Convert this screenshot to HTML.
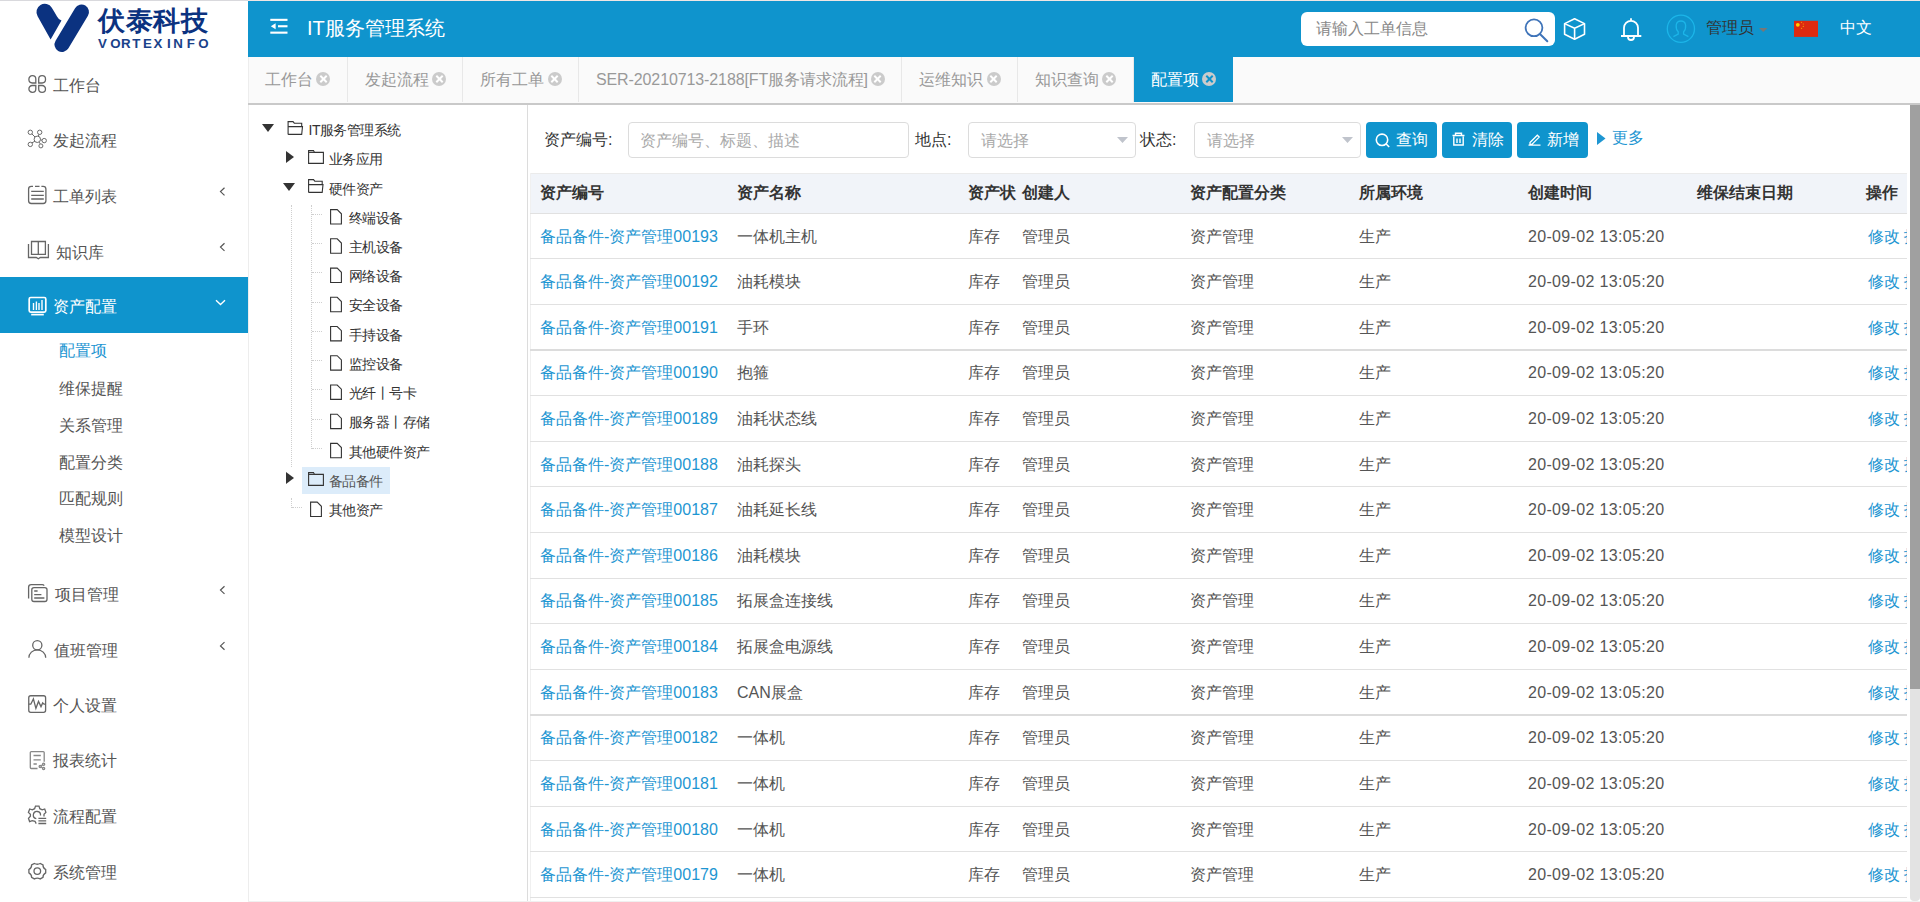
<!DOCTYPE html>
<html><head><meta charset="utf-8">
<style>
*{box-sizing:border-box;margin:0;padding:0}
html,body{width:1920px;height:902px;overflow:hidden;background:#fff}
body{position:relative;font-family:"Liberation Sans",sans-serif;font-size:16px;color:#555}
.a{position:absolute;white-space:nowrap}
svg{position:absolute;overflow:visible}
.tx{line-height:20px;font-size:16px;color:#555}
.chev{width:7px;height:7px;border-left:1.2px solid #555;border-bottom:1.2px solid #555;transform:rotate(45deg)}
.tab{position:absolute;top:57px;height:45px;border-right:1px solid #e8e8e8;color:#999;font-size:16px;white-space:nowrap}
.tab .t{position:absolute;top:13px;line-height:20px}
.tab .x{position:absolute;top:15px;width:14px;height:14px;border-radius:50%;background:#cbcbcb}
.tab .x:before,.tab .x:after{content:"";position:absolute;left:2.5px;top:6px;width:9px;height:2px;background:#fff;transform:rotate(45deg)}
.tab .x:after{transform:rotate(-45deg)}
.tab.act{background:#0f94cd;color:#fff;border-right:none}
.tab.act .x:before,.tab.act .x:after{background:#0f94cd}
.tn{position:absolute;font-size:14px;letter-spacing:-0.5px;line-height:17px;color:#333;white-space:nowrap}
.tri-d{position:absolute;width:0;height:0;border-left:6px solid transparent;border-right:6px solid transparent;border-top:8px solid #333}
.tri-r{position:absolute;width:0;height:0;border-top:6px solid transparent;border-bottom:6px solid transparent;border-left:8px solid #333}
.dv{position:absolute;width:1px;border-left:1px dotted #cfcfcf}
.dh{position:absolute;height:1px;border-top:1px dotted #cfcfcf}
.th{position:absolute;top:173px;font-weight:bold;color:#333;line-height:20px;white-space:nowrap}
.cell{position:absolute;line-height:20px;white-space:nowrap;color:#555}
.lnk{color:#1e96d2}
.rl{position:absolute;left:530px;width:1380px;height:1px;background:#e1e1e1}
.lbl{position:absolute;top:130px;line-height:20px;color:#333;white-space:nowrap}
.inp{position:absolute;top:122px;height:36px;border:1px solid #dcdcdc;border-radius:4px;background:#fff}
.ph{position:absolute;top:8px;line-height:20px;color:#aaa;white-space:nowrap}
.btn{position:absolute;top:122px;height:36px;border-radius:4px;background:#0f94cd;color:#fff;white-space:nowrap}

</style></head><body>
<div class="a" style="left:0;top:0;width:248px;height:1px;background:#d9d9dd"></div>
<div class="a" style="left:248px;top:0;width:1672px;height:1px;background:#efe6e4"></div>
<div class="a" style="left:248px;top:57px;width:1px;height:845px;background:#ededed"></div>
<!-- logo -->
<svg style="left:0;top:0" width="100" height="56" viewBox="0 0 100 56">
<path d="M50.6,39.5 L37.6,16.2 A8,8 0 0 1 51.8,7.8 Q55,13 57,16.5 Q58.5,19.5 61.5,20.6 Z" fill="#0b3280"/>
<line x1="81.5" y1="12" x2="62" y2="44.5" stroke="#fff" stroke-width="19.5" stroke-linecap="round"/>
<line x1="81.5" y1="12" x2="62" y2="44.5" stroke="#0b3280" stroke-width="15" stroke-linecap="round"/>
</svg>
<div class="a" style="left:98px;top:4px;font-size:27px;line-height:34px;font-weight:bold;color:#0b3280;letter-spacing:0.6px">伏泰科技</div>
<div class="a" style="left:98.0px;top:36.5px;font-size:13.3px;line-height:14px;font-weight:bold;color:#1a428a">V</div><div class="a" style="left:110.2px;top:36.5px;font-size:13.3px;line-height:14px;font-weight:bold;color:#1a428a">O</div><div class="a" style="left:121.1px;top:36.5px;font-size:13.3px;line-height:14px;font-weight:bold;color:#1a428a">R</div><div class="a" style="left:132.2px;top:36.5px;font-size:13.3px;line-height:14px;font-weight:bold;color:#1a428a">T</div><div class="a" style="left:142.9px;top:36.5px;font-size:13.3px;line-height:14px;font-weight:bold;color:#1a428a">E</div><div class="a" style="left:153.6px;top:36.5px;font-size:13.3px;line-height:14px;font-weight:bold;color:#1a428a">X</div><div class="a" style="left:167.0px;top:36.5px;font-size:13.3px;line-height:14px;font-weight:bold;color:#1a428a">I</div><div class="a" style="left:173.2px;top:36.5px;font-size:13.3px;line-height:14px;font-weight:bold;color:#1a428a">N</div><div class="a" style="left:186.7px;top:36.5px;font-size:13.3px;line-height:14px;font-weight:bold;color:#1a428a">F</div><div class="a" style="left:198.2px;top:36.5px;font-size:13.3px;line-height:14px;font-weight:bold;color:#1a428a">O</div>

<!-- menu -->
<svg style="left:0;top:0" width="248" height="902" viewBox="0 0 248 902" fill="none" stroke="#666" stroke-width="1.3">
<!-- 工作台 -->
<path d="M32.3,75.7 L32.4,75.7 A3.4,3.4 0 0 1 35.8,79.10000000000001 L35.8,83 L32.3,83 A3.4,3.4 0 0 1 28.9,79.6 L28.9,79.10000000000001 A3.4,3.4 0 0 1 32.3,75.7 Z"/><path d="M42.1,75.7 L42.1,75.7 A3.4,3.4 0 0 1 45.5,79.10000000000001 L45.5,79.6 A3.4,3.4 0 0 1 42.1,83 L38.7,83 L38.7,79.10000000000001 A3.4,3.4 0 0 1 42.1,75.7 Z"/><path d="M32.3,85.5 L35.8,85.5 L35.8,88.89999999999999 A3.4,3.4 0 0 1 32.4,92.3 L32.3,92.3 A3.4,3.4 0 0 1 28.9,88.89999999999999 L28.9,88.9 A3.4,3.4 0 0 1 32.3,85.5 Z"/><path d="M38.7,85.5 L42.1,85.5 A3.4,3.4 0 0 1 45.5,88.9 L45.5,88.89999999999999 A3.4,3.4 0 0 1 42.1,92.3 L42.1,92.3 A3.4,3.4 0 0 1 38.7,88.89999999999999 L38.7,85.5 Z"/>
<!-- 发起流程 -->
<g transform="translate(24,126)" stroke-width="1" stroke="#6a6a6a">
<circle cx="13.3" cy="13.3" r="3.2"/><circle cx="6.3" cy="6.3" r="2.2"/><circle cx="15.7" cy="6.3" r="2.2"/><circle cx="20.2" cy="14.6" r="2.2"/><circle cx="6.3" cy="18.4" r="2.2"/><circle cx="16.9" cy="19.9" r="2"/>
<path d="M7.9,7.9 L11,11 M15,8.3 L14.3,10.2 M16.5,13.9 L18,14.2 M8,16.8 L10.9,15.3 M15.3,16.2 L16.2,17.9"/>
</g>
<!-- 工单列表 -->
<g transform="translate(24,182)">
<path d="M9,4.3 L7.3,4.3 Q4.6,4.3 4.6,7 L4.6,18.8 Q4.6,21.5 7.3,21.5 L19.2,21.5 Q21.9,21.5 21.9,18.8 L21.9,7 Q21.9,4.3 19.2,4.3 L17.4,4.3 M11,4.3 L15.5,4.3"/>
<path d="M7.2,9.4 L19.8,9.4 M7.2,13.4 L19.8,13.4 M7.2,17 L19.8,17"/>
</g>
<!-- 知识库 -->
<g transform="translate(24,238)">
<path d="M4.5,6 L4.5,19.5 L12.3,19.5 L14.3,20.8 L16.3,19.5 L24.4,19.5 L24.4,6"/>
<path d="M7.5,3.5 L14.3,3.5 L14.3,16.4 L7.5,16.4 Z M14.3,3.5 L21.4,3.5 L21.4,16.4 L14.3,16.4"/>
</g>
<!-- 资产配置 active (white) -->
<g transform="translate(24,292)" stroke="#fff" stroke-width="1.7">
<rect x="5.2" y="5.5" width="16.6" height="14.6" rx="1.5"/>
<path d="M7.2,22.6 L19.8,22.6"/>
<path d="M9.5,11 L9.5,18 M12.4,9.6 L12.4,18 M15,11 L15,18 M18,8 L18,18" stroke-width="1.4"/>
</g>
<!-- 项目管理 -->
<g transform="translate(24,580)">
<path d="M4.6,18.4 L4.6,7.2 Q4.6,4.6 7.2,4.6 L18.2,4.6 Q19.5,4.6 20.2,5.6"/>
<rect x="7.8" y="7.6" width="15.2" height="13.9" rx="2.2"/>
<path d="M10.2,11 L13.6,11 M10.2,14.55 L17.4,14.55 M10.2,18 L20.4,18"/>
</g>
<!-- 值班管理 -->
<g transform="translate(24,636)">
<circle cx="13.3" cy="9.2" r="4.6"/>
<path d="M4.9,21.8 A8.4,8 0 0 1 21.7,21.8"/>
</g>
<!-- 个人设置 -->
<g transform="translate(24,691)">
<rect x="4.75" y="4.75" width="16.85" height="16.55" rx="2"/>
<path d="M4.75,13.2 L6.8,13.2 L9.4,7.9 L11.9,17.3 L14.5,10.4 L17,15.6 L18.7,11.9 L20,13.2 L21.6,13.2"/>
</g>
<!-- 报表统计 -->
<g transform="translate(24,747)" stroke="#888">
<path d="M20.2,14.7 L20.2,5.6 Q20.2,4.6 19.2,4.6 L7.3,4.6 Q6.3,4.6 6.3,5.6 L6.3,20.5 Q6.3,21.5 7.3,21.5 L13.5,21.5"/>
<path d="M9.5,8.5 L16.8,8.5 M9.5,12.8 L16.8,12.8 M9.5,17 L12.8,17"/>
<circle cx="19.6" cy="17.2" r="1.1"/><circle cx="16.2" cy="19.4" r="1.1"/><circle cx="19.6" cy="21.5" r="1.1"/>
<path d="M17.2,18.8 L18.6,17.9 M17.2,20 L18.6,20.9"/>
</g>
<!-- 流程配置 -->
<g transform="translate(24,802)">
<path d="M12.2,21.6 L11,19.3 L8.2,18.6 L5.6,19.6 L4.5,16.3 L6.4,14.3 L6.4,12.3 L4.4,10.4 L5.7,7 L8.3,7.9 L10.6,6.7 L11.5,4.1 L15,4.1 L15.8,6.7 L18.2,7.9 L20.7,7 L21.9,10.4 L20,12.3 L20,14.6"/>
<path d="M12.3,16.6 A3.6,3.6 0 1 1 16.5,13.5"/>
<path d="M14.4,16.4 L22.2,16.4 M14.4,18.9 L22.2,18.9 M14.4,21.5 L22.2,21.5"/>
</g>
<!-- 系统管理 -->
<g transform="translate(24,858)">
<path d="M10.4,5.5 Q13.3,7 16.2,5.5 L19,7 Q18.8,10 21.7,11.5 L21.7,14.8 Q18.8,16.3 19,19.4 L16.2,20.9 Q13.3,19.3 10.4,20.9 L7.6,19.4 Q7.8,16.3 4.9,14.8 L4.9,11.5 Q7.8,10 7.6,7 Z"/>
<circle cx="13.3" cy="13.1" r="3.3"/>
</g>
<!-- chevrons -->
<g stroke="#555" stroke-width="1.2">
<path d="M224.5,187.8 L220.5,191.6 L224.5,195.4"/>
<path d="M224.5,243.3 L220.5,247.1 L224.5,250.9"/>
<path d="M224.5,586.3 L220.5,590.1 L224.5,593.9"/>
<path d="M224.5,642.1 L220.5,645.9 L224.5,649.7"/>
</g>
</svg>
<div class="a" style="left:0;top:277px;width:248px;height:56px;background:#0f94cd"></div>
<svg style="left:0;top:0" width="248" height="340" fill="none">
<g transform="translate(24,292)" stroke="#fff" stroke-width="1.7">
<rect x="5.2" y="5.5" width="16.6" height="14.6" rx="1.5"/>
<path d="M7.2,22.6 L19.8,22.6"/>
<path d="M9.5,11 L9.5,18 M12.4,9.6 L12.4,18 M15,11 L15,18 M18,8 L18,18" stroke-width="1.4"/>
</g>
<path d="M216,300.3 L220.5,304.6 L225,300.3" stroke="#fff" stroke-width="1.4"/>
</svg>
<div class="a tx" style="left:53px;top:76px">工作台</div>
<div class="a tx" style="left:53px;top:131px">发起流程</div>
<div class="a tx" style="left:53px;top:187px">工单列表</div>
<div class="a tx" style="left:55.5px;top:243px">知识库</div>
<div class="a tx" style="left:53px;top:297px;color:#fff">资产配置</div>
<div class="a tx" style="left:59px;top:341px;color:#1e96d2">配置项</div>
<div class="a tx" style="left:59px;top:379px">维保提醒</div>
<div class="a tx" style="left:59px;top:416px">关系管理</div>
<div class="a tx" style="left:59px;top:453px">配置分类</div>
<div class="a tx" style="left:59px;top:489px">匹配规则</div>
<div class="a tx" style="left:59px;top:526px">模型设计</div>
<div class="a tx" style="left:55px;top:585px">项目管理</div>
<div class="a tx" style="left:54px;top:641px">值班管理</div>
<div class="a tx" style="left:53px;top:696px">个人设置</div>
<div class="a tx" style="left:53px;top:751px">报表统计</div>
<div class="a tx" style="left:53px;top:807px">流程配置</div>
<div class="a tx" style="left:53px;top:863px">系统管理</div>

<div class="a" style="left:248px;top:1px;width:1672px;height:56px;background:#0f94cd"></div>
<svg style="left:0;top:0" width="1920" height="57" fill="none">
<g fill="#fff">
<rect x="270.3" y="18.8" width="17.2" height="2.1"/>
<rect x="278" y="25.2" width="9.5" height="2.1"/>
<rect x="270.3" y="31.6" width="17.2" height="2.1"/>
<path d="M270.8,26.2 L275.6,23.2 L275.6,29.2 Z"/>
</g>
</svg>
<div class="a" style="left:307px;top:16px;font-size:20px;line-height:24px;color:#fff">IT服务管理系统</div>
<div class="a" style="left:1301px;top:12px;width:254px;height:34px;background:#fff;border-radius:6px"></div>
<div class="a" style="left:1316px;top:19px;font-size:16px;line-height:20px;color:#888">请输入工单信息</div>
<svg style="left:0;top:0" width="1920" height="57" fill="none">
<circle cx="1534" cy="27.8" r="8.4" stroke="#3f74b9" stroke-width="1.8"/>
<path d="M1540.2,34.2 L1547.3,41.3" stroke="#3f74b9" stroke-width="2" stroke-linecap="round"/>
<g stroke="#fff" stroke-width="1.6" stroke-linejoin="round">
<path d="M1574.6,18.7 L1584.5,23.6 L1584.5,34.3 L1574.6,39.2 L1564.6,34.3 L1564.6,23.6 Z"/>
<path d="M1564.6,23.6 L1574.6,28.3 L1584.5,23.6 M1574.6,28.3 L1574.6,39.2"/>
</g>
<g stroke="#fff" stroke-width="1.8">
<path d="M1624,35.8 L1624,27.8 A7,7 0 0 1 1638,27.8 L1638,35.8"/>
<path d="M1621,36 L1641.3,36" stroke-width="2"/>
<path d="M1628,37 A3,3 0 0 0 1634,37"/>
<path d="M1631,18.3 L1631,20.8"/>
</g>
<circle cx="1680.9" cy="28.75" r="13.6" stroke="#1cb5e8" stroke-width="1.3"/>
<path d="M1673.4,36.7 L1678.2,34.2 L1678.2,31.8 Q1675.8,29.5 1676.2,25 Q1676.8,21 1680.9,21 Q1685,21 1685.6,25 Q1686,29.5 1683.6,31.8 L1683.6,34.2 L1688.4,36.7" stroke="#1cb5e8" stroke-width="1.3"/>
<path d="M1759,28 L1767.5,28 L1763.25,32 Z" fill="#777"/>
<rect x="1794" y="20.8" width="24" height="16.1" fill="#dd2a10"/>
<circle cx="1797.8" cy="24.8" r="1.9" fill="#ffd000"/>
<circle cx="1801.5" cy="22.3" r="0.6" fill="#f5a000"/><circle cx="1803.3" cy="24" r="0.6" fill="#f5a000"/>
<circle cx="1803.3" cy="26.4" r="0.6" fill="#f5a000"/><circle cx="1801.6" cy="28.3" r="0.6" fill="#f5a000"/>
</svg>
<div class="a" style="left:1706px;top:18px;font-size:16px;line-height:20px;color:#333">管理员</div>
<div class="a" style="left:1840px;top:18px;font-size:16px;line-height:20px;color:#fff">中文</div>

<div class="a" style="left:249px;top:57px;width:1671px;height:46px;background:#fafafa"></div>
<div class="a" style="left:248px;top:103px;width:1672px;height:2px;background:#c9c9c9"></div>
<div class="tab" style="left:249px;width:99px"><span class="t" style="left:16px">工作台</span><span class="x" style="left:67px"></span></div>
<div class="tab" style="left:348px;width:115px"><span class="t" style="left:17px">发起流程</span><span class="x" style="left:84px"></span></div>
<div class="tab" style="left:463px;width:116px"><span class="t" style="left:17px">所有工单</span><span class="x" style="left:84.5px"></span></div>
<div class="tab" style="left:579px;width:323px"><span class="t" style="left:17px;letter-spacing:-0.11px">SER-20210713-2188[FT服务请求流程]</span><span class="x" style="left:291.5px"></span></div>
<div class="tab" style="left:902px;width:116px"><span class="t" style="left:17px">运维知识</span><span class="x" style="left:84.5px"></span></div>
<div class="tab" style="left:1018px;width:116px"><span class="t" style="left:17px">知识查询</span><span class="x" style="left:84px"></span></div>
<div class="tab act" style="left:1134px;width:99px"><span class="t" style="left:17px">配置项</span><span class="x" style="left:68px"></span></div>

<div class="a" style="left:302px;top:467px;width:88px;height:27px;background:#dcecfa"></div>
<div class="dv" style="left:291px;top:205px;height:262px"></div>
<div class="dv" style="left:291px;top:498px;height:10px"></div>
<div class="dh" style="left:292px;top:507px;width:10px"></div>
<div class="dv" style="left:311px;top:205px;height:244px"></div>
<div class="dh" style="left:312px;top:214px;width:10px"></div>
<div class="dh" style="left:312px;top:243px;width:10px"></div>
<div class="dh" style="left:312px;top:272px;width:10px"></div>
<div class="dh" style="left:312px;top:302px;width:10px"></div>
<div class="dh" style="left:312px;top:331px;width:10px"></div>
<div class="dh" style="left:312px;top:360px;width:10px"></div>
<div class="dh" style="left:312px;top:389px;width:10px"></div>
<div class="dh" style="left:312px;top:419px;width:10px"></div>
<div class="dh" style="left:312px;top:448px;width:10px"></div>
<div class="tri-d" style="left:262px;top:124px"></div>
<div class="tri-r" style="left:286px;top:150.5px"></div>
<div class="tri-d" style="left:283px;top:183px"></div>
<div class="tri-r" style="left:286px;top:471.5px"></div>
<svg style="left:0;top:0" width="530" height="560" fill="none" stroke="#333" stroke-width="1.1">
<path d="M288.1,134.4 L288.1,121.6 L293.0,121.6 L294.3,123.2 L301.7,123.2 L301.7,126.6"/><path d="M288.1,126.6 L302.5,126.6 L301.7,134.4 L288.1,134.4"/>
<path d="M308.6,163.4 L308.6,150.6 L313.5,150.6 L314.5,152.4 L323.4,152.4 L323.4,163.4 Z"/><path d="M308.6,152.4 L314.5,152.4"/>
<path d="M308.6,192.4 L308.6,179.6 L313.5,179.6 L314.8,181.2 L322.2,181.2 L322.2,184.6"/><path d="M308.6,184.6 L323,184.6 L322.2,192.4 L308.6,192.4"/>
<path d="M330.6,209.6 L337.2,209.6 L341.4,213.8 L341.4,224.0 L330.6,224.0 Z"/>
<path d="M330.6,238.79999999999998 L337.2,238.79999999999998 L341.4,243.0 L341.4,253.2 L330.6,253.2 Z"/>
<path d="M330.6,268.1 L337.2,268.1 L341.4,272.3 L341.4,282.5 L330.6,282.5 Z"/>
<path d="M330.6,297.3 L337.2,297.3 L341.4,301.5 L341.4,311.7 L330.6,311.7 Z"/>
<path d="M330.6,326.5 L337.2,326.5 L341.4,330.7 L341.4,340.9 L330.6,340.9 Z"/>
<path d="M330.6,355.70000000000005 L337.2,355.70000000000005 L341.4,359.90000000000003 L341.4,370.1 L330.6,370.1 Z"/>
<path d="M330.6,385.0 L337.2,385.0 L341.4,389.2 L341.4,399.4 L330.6,399.4 Z"/>
<path d="M330.6,414.20000000000005 L337.2,414.20000000000005 L341.4,418.40000000000003 L341.4,428.6 L330.6,428.6 Z"/>
<path d="M330.6,443.40000000000003 L337.2,443.40000000000003 L341.4,447.6 L341.4,457.8 L330.6,457.8 Z"/>
<path d="M308.6,485.4 L308.6,472.6 L313.5,472.6 L314.5,474.4 L323.4,474.4 L323.4,485.4 Z"/><path d="M308.6,474.4 L314.5,474.4"/>
<path d="M310.6,502.1 L317.2,502.1 L321.4,506.3 L321.4,516.5 L310.6,516.5 Z"/>
</svg>
<div class="tn" style="left:308.5px;top:122.0px">IT服务管理系统</div>
<div class="tn" style="left:328.5px;top:151.2px">业务应用</div>
<div class="tn" style="left:328.5px;top:180.5px">硬件资产</div>
<div class="tn" style="left:348.5px;top:209.7px">终端设备</div>
<div class="tn" style="left:348.5px;top:238.9px">主机设备</div>
<div class="tn" style="left:348.5px;top:268.1px">网络设备</div>
<div class="tn" style="left:348.5px;top:297.4px">安全设备</div>
<div class="tn" style="left:348.5px;top:326.6px">手持设备</div>
<div class="tn" style="left:348.5px;top:355.8px">监控设备</div>
<div class="tn" style="left:348.5px;top:385.1px">光纤丨号卡</div>
<div class="tn" style="left:348.5px;top:414.3px">服务器丨存储</div>
<div class="tn" style="left:348.5px;top:443.5px">其他硬件资产</div>
<div class="tn" style="left:328.5px;top:472.8px;color:#555">备品备件</div>
<div class="tn" style="left:328.5px;top:502.0px">其他资产</div>
<div class="a" style="left:527px;top:105px;width:1px;height:796px;background:#dcdcdc"></div>
<div class="lbl" style="left:544px">资产编号:</div>
<div class="inp" style="left:628px;width:281px"><span class="ph" style="left:11px">资产编号、标题、描述</span></div>
<div class="lbl" style="left:915px">地点:</div>
<div class="inp" style="left:968px;width:168px"><span class="ph" style="left:12px">请选择</span></div>
<div class="lbl" style="left:1140px">状态:</div>
<div class="inp" style="left:1194px;width:167px"><span class="ph" style="left:12px">请选择</span></div>
<svg style="left:0;top:0" width="1920" height="170"><path d="M1117,137 L1128,137 L1122.5,143 Z M1342,137 L1353,137 L1347.5,143 Z" fill="#c0c4cc"/></svg>
<div class="btn" style="left:1366px;width:71px"><span class="a" style="left:30px;top:8px;line-height:20px">查询</span></div>
<div class="btn" style="left:1442px;width:70px"><span class="a" style="left:30px;top:8px;line-height:20px">清除</span></div>
<div class="btn" style="left:1517px;width:71px"><span class="a" style="left:30px;top:8px;line-height:20px">新增</span></div>
<svg style="left:0;top:0" width="1920" height="170" fill="none" stroke="#fff" stroke-width="1.6">
<circle cx="1382" cy="139.8" r="5.7"/><path d="M1386.2,144 L1389.2,147"/>
<path d="M1452.5,135.5 L1464.5,135.5 M1455.5,135.5 L1455.5,133.2 L1461.5,133.2 L1461.5,135.5 M1453.8,136.5 L1453.8,145 L1463.2,145 L1463.2,136.5 M1457,138.5 L1457,143 M1460,138.5 L1460,143" stroke-width="1.4"/>
<path d="M1528.5,145.2 L1540.5,145.2 M1530,142.5 L1537.3,135.2 L1539.2,137.1 L1531.9,144.4 L1530,144.4 Z" stroke-width="1.3"/>
</svg>
<svg style="left:0;top:0" width="1920" height="170"><path d="M1597,132 L1605.5,138.5 L1597,145 Z" fill="#1e96d2"/></svg>
<div class="a" style="left:1612px;top:128px;line-height:20px;color:#1e96d2">更多</div>
<div class="a" style="left:530px;top:173px;width:1377px;height:40px;background:#f1f4f9;border-top:1px solid #ebebeb"></div>
<div class="a" style="left:530px;top:173px;width:1px;height:728px;background:#f0f0f0"></div>
<div class="th" style="left:540px;top:183px">资产编号</div>
<div class="th" style="left:737px;top:183px">资产名称</div>
<div class="th" style="left:968px;top:183px">资产状</div>
<div class="th" style="left:1022px;top:183px">创建人</div>
<div class="th" style="left:1190px;top:183px">资产配置分类</div>
<div class="th" style="left:1359px;top:183px">所属环境</div>
<div class="th" style="left:1528px;top:183px">创建时间</div>
<div class="th" style="left:1697px;top:183px">维保结束日期</div>
<div class="th" style="left:1866px;top:183px">操作</div>
<div class="rl" style="top:212.80px;width:1377px"></div>
<div class="rl" style="top:258.41px;width:1377px"></div>
<div class="rl" style="top:304.02px;width:1377px"></div>
<div class="rl" style="top:349px;height:2px;width:1377px;background:#dcdcdc"></div>
<div class="rl" style="top:395.24px;width:1377px"></div>
<div class="rl" style="top:440.85px;width:1377px"></div>
<div class="rl" style="top:486.46px;width:1377px"></div>
<div class="rl" style="top:532.07px;width:1377px"></div>
<div class="rl" style="top:577.68px;width:1377px"></div>
<div class="rl" style="top:623.29px;width:1377px"></div>
<div class="rl" style="top:668.90px;width:1377px"></div>
<div class="rl" style="top:714px;height:2px;width:1377px;background:#dcdcdc"></div>
<div class="rl" style="top:760.12px;width:1377px"></div>
<div class="rl" style="top:805.73px;width:1377px"></div>
<div class="rl" style="top:851.34px;width:1377px"></div>
<div class="rl" style="top:896.95px;width:1377px"></div>
<div class="a" style="left:530px;top:214px;width:1377px;height:688px;overflow:hidden">
<div class="cell lnk" style="left:10px;top:12.61px">备品备件-资产管理00193</div>
<div class="cell" style="left:207px;top:12.61px">一体机主机</div>
<div class="cell" style="left:438px;top:12.61px">库存</div>
<div class="cell" style="left:492px;top:12.61px">管理员</div>
<div class="cell" style="left:660px;top:12.61px">资产管理</div>
<div class="cell" style="left:829px;top:12.61px">生产</div>
<div class="cell" style="left:998px;top:12.61px;letter-spacing:0.33px">20-09-02 13:05:20</div>
<div class="cell lnk" style="left:1338px;top:12.61px">修改 报废</div>
<div class="cell lnk" style="left:10px;top:58.22px">备品备件-资产管理00192</div>
<div class="cell" style="left:207px;top:58.22px">油耗模块</div>
<div class="cell" style="left:438px;top:58.22px">库存</div>
<div class="cell" style="left:492px;top:58.22px">管理员</div>
<div class="cell" style="left:660px;top:58.22px">资产管理</div>
<div class="cell" style="left:829px;top:58.22px">生产</div>
<div class="cell" style="left:998px;top:58.22px;letter-spacing:0.33px">20-09-02 13:05:20</div>
<div class="cell lnk" style="left:1338px;top:58.22px">修改 报废</div>
<div class="cell lnk" style="left:10px;top:103.82px">备品备件-资产管理00191</div>
<div class="cell" style="left:207px;top:103.82px">手环</div>
<div class="cell" style="left:438px;top:103.82px">库存</div>
<div class="cell" style="left:492px;top:103.82px">管理员</div>
<div class="cell" style="left:660px;top:103.82px">资产管理</div>
<div class="cell" style="left:829px;top:103.82px">生产</div>
<div class="cell" style="left:998px;top:103.82px;letter-spacing:0.33px">20-09-02 13:05:20</div>
<div class="cell lnk" style="left:1338px;top:103.82px">修改 报废</div>
<div class="cell lnk" style="left:10px;top:149.44px">备品备件-资产管理00190</div>
<div class="cell" style="left:207px;top:149.44px">抱箍</div>
<div class="cell" style="left:438px;top:149.44px">库存</div>
<div class="cell" style="left:492px;top:149.44px">管理员</div>
<div class="cell" style="left:660px;top:149.44px">资产管理</div>
<div class="cell" style="left:829px;top:149.44px">生产</div>
<div class="cell" style="left:998px;top:149.44px;letter-spacing:0.33px">20-09-02 13:05:20</div>
<div class="cell lnk" style="left:1338px;top:149.44px">修改 报废</div>
<div class="cell lnk" style="left:10px;top:195.05px">备品备件-资产管理00189</div>
<div class="cell" style="left:207px;top:195.05px">油耗状态线</div>
<div class="cell" style="left:438px;top:195.05px">库存</div>
<div class="cell" style="left:492px;top:195.05px">管理员</div>
<div class="cell" style="left:660px;top:195.05px">资产管理</div>
<div class="cell" style="left:829px;top:195.05px">生产</div>
<div class="cell" style="left:998px;top:195.05px;letter-spacing:0.33px">20-09-02 13:05:20</div>
<div class="cell lnk" style="left:1338px;top:195.05px">修改 报废</div>
<div class="cell lnk" style="left:10px;top:240.66px">备品备件-资产管理00188</div>
<div class="cell" style="left:207px;top:240.66px">油耗探头</div>
<div class="cell" style="left:438px;top:240.66px">库存</div>
<div class="cell" style="left:492px;top:240.66px">管理员</div>
<div class="cell" style="left:660px;top:240.66px">资产管理</div>
<div class="cell" style="left:829px;top:240.66px">生产</div>
<div class="cell" style="left:998px;top:240.66px;letter-spacing:0.33px">20-09-02 13:05:20</div>
<div class="cell lnk" style="left:1338px;top:240.66px">修改 报废</div>
<div class="cell lnk" style="left:10px;top:286.26px">备品备件-资产管理00187</div>
<div class="cell" style="left:207px;top:286.26px">油耗延长线</div>
<div class="cell" style="left:438px;top:286.26px">库存</div>
<div class="cell" style="left:492px;top:286.26px">管理员</div>
<div class="cell" style="left:660px;top:286.26px">资产管理</div>
<div class="cell" style="left:829px;top:286.26px">生产</div>
<div class="cell" style="left:998px;top:286.26px;letter-spacing:0.33px">20-09-02 13:05:20</div>
<div class="cell lnk" style="left:1338px;top:286.26px">修改 报废</div>
<div class="cell lnk" style="left:10px;top:331.87px">备品备件-资产管理00186</div>
<div class="cell" style="left:207px;top:331.87px">油耗模块</div>
<div class="cell" style="left:438px;top:331.87px">库存</div>
<div class="cell" style="left:492px;top:331.87px">管理员</div>
<div class="cell" style="left:660px;top:331.87px">资产管理</div>
<div class="cell" style="left:829px;top:331.87px">生产</div>
<div class="cell" style="left:998px;top:331.87px;letter-spacing:0.33px">20-09-02 13:05:20</div>
<div class="cell lnk" style="left:1338px;top:331.87px">修改 报废</div>
<div class="cell lnk" style="left:10px;top:377.49px">备品备件-资产管理00185</div>
<div class="cell" style="left:207px;top:377.49px">拓展盒连接线</div>
<div class="cell" style="left:438px;top:377.49px">库存</div>
<div class="cell" style="left:492px;top:377.49px">管理员</div>
<div class="cell" style="left:660px;top:377.49px">资产管理</div>
<div class="cell" style="left:829px;top:377.49px">生产</div>
<div class="cell" style="left:998px;top:377.49px;letter-spacing:0.33px">20-09-02 13:05:20</div>
<div class="cell lnk" style="left:1338px;top:377.49px">修改 报废</div>
<div class="cell lnk" style="left:10px;top:423.09px">备品备件-资产管理00184</div>
<div class="cell" style="left:207px;top:423.09px">拓展盒电源线</div>
<div class="cell" style="left:438px;top:423.09px">库存</div>
<div class="cell" style="left:492px;top:423.09px">管理员</div>
<div class="cell" style="left:660px;top:423.09px">资产管理</div>
<div class="cell" style="left:829px;top:423.09px">生产</div>
<div class="cell" style="left:998px;top:423.09px;letter-spacing:0.33px">20-09-02 13:05:20</div>
<div class="cell lnk" style="left:1338px;top:423.09px">修改 报废</div>
<div class="cell lnk" style="left:10px;top:468.71px">备品备件-资产管理00183</div>
<div class="cell" style="left:207px;top:468.71px">CAN展盒</div>
<div class="cell" style="left:438px;top:468.71px">库存</div>
<div class="cell" style="left:492px;top:468.71px">管理员</div>
<div class="cell" style="left:660px;top:468.71px">资产管理</div>
<div class="cell" style="left:829px;top:468.71px">生产</div>
<div class="cell" style="left:998px;top:468.71px;letter-spacing:0.33px">20-09-02 13:05:20</div>
<div class="cell lnk" style="left:1338px;top:468.71px">修改 报废</div>
<div class="cell lnk" style="left:10px;top:514.31px">备品备件-资产管理00182</div>
<div class="cell" style="left:207px;top:514.31px">一体机</div>
<div class="cell" style="left:438px;top:514.31px">库存</div>
<div class="cell" style="left:492px;top:514.31px">管理员</div>
<div class="cell" style="left:660px;top:514.31px">资产管理</div>
<div class="cell" style="left:829px;top:514.31px">生产</div>
<div class="cell" style="left:998px;top:514.31px;letter-spacing:0.33px">20-09-02 13:05:20</div>
<div class="cell lnk" style="left:1338px;top:514.31px">修改 报废</div>
<div class="cell lnk" style="left:10px;top:559.92px">备品备件-资产管理00181</div>
<div class="cell" style="left:207px;top:559.92px">一体机</div>
<div class="cell" style="left:438px;top:559.92px">库存</div>
<div class="cell" style="left:492px;top:559.92px">管理员</div>
<div class="cell" style="left:660px;top:559.92px">资产管理</div>
<div class="cell" style="left:829px;top:559.92px">生产</div>
<div class="cell" style="left:998px;top:559.92px;letter-spacing:0.33px">20-09-02 13:05:20</div>
<div class="cell lnk" style="left:1338px;top:559.92px">修改 报废</div>
<div class="cell lnk" style="left:10px;top:605.53px">备品备件-资产管理00180</div>
<div class="cell" style="left:207px;top:605.53px">一体机</div>
<div class="cell" style="left:438px;top:605.53px">库存</div>
<div class="cell" style="left:492px;top:605.53px">管理员</div>
<div class="cell" style="left:660px;top:605.53px">资产管理</div>
<div class="cell" style="left:829px;top:605.53px">生产</div>
<div class="cell" style="left:998px;top:605.53px;letter-spacing:0.33px">20-09-02 13:05:20</div>
<div class="cell lnk" style="left:1338px;top:605.53px">修改 报废</div>
<div class="cell lnk" style="left:10px;top:651.14px">备品备件-资产管理00179</div>
<div class="cell" style="left:207px;top:651.14px">一体机</div>
<div class="cell" style="left:438px;top:651.14px">库存</div>
<div class="cell" style="left:492px;top:651.14px">管理员</div>
<div class="cell" style="left:660px;top:651.14px">资产管理</div>
<div class="cell" style="left:829px;top:651.14px">生产</div>
<div class="cell" style="left:998px;top:651.14px;letter-spacing:0.33px">20-09-02 13:05:20</div>
<div class="cell lnk" style="left:1338px;top:651.14px">修改 报废</div>
</div>
<div class="a" style="left:1910px;top:105px;width:10px;height:796px;background:#e3e3e3;border-radius:0 0 4px 4px"></div>
<div class="a" style="left:1910px;top:105px;width:10px;height:584px;background:#a0a0a0"></div>
<div class="a" style="left:248px;top:901px;width:1672px;height:1px;background:#f0f0f0"></div>

</body></html>
